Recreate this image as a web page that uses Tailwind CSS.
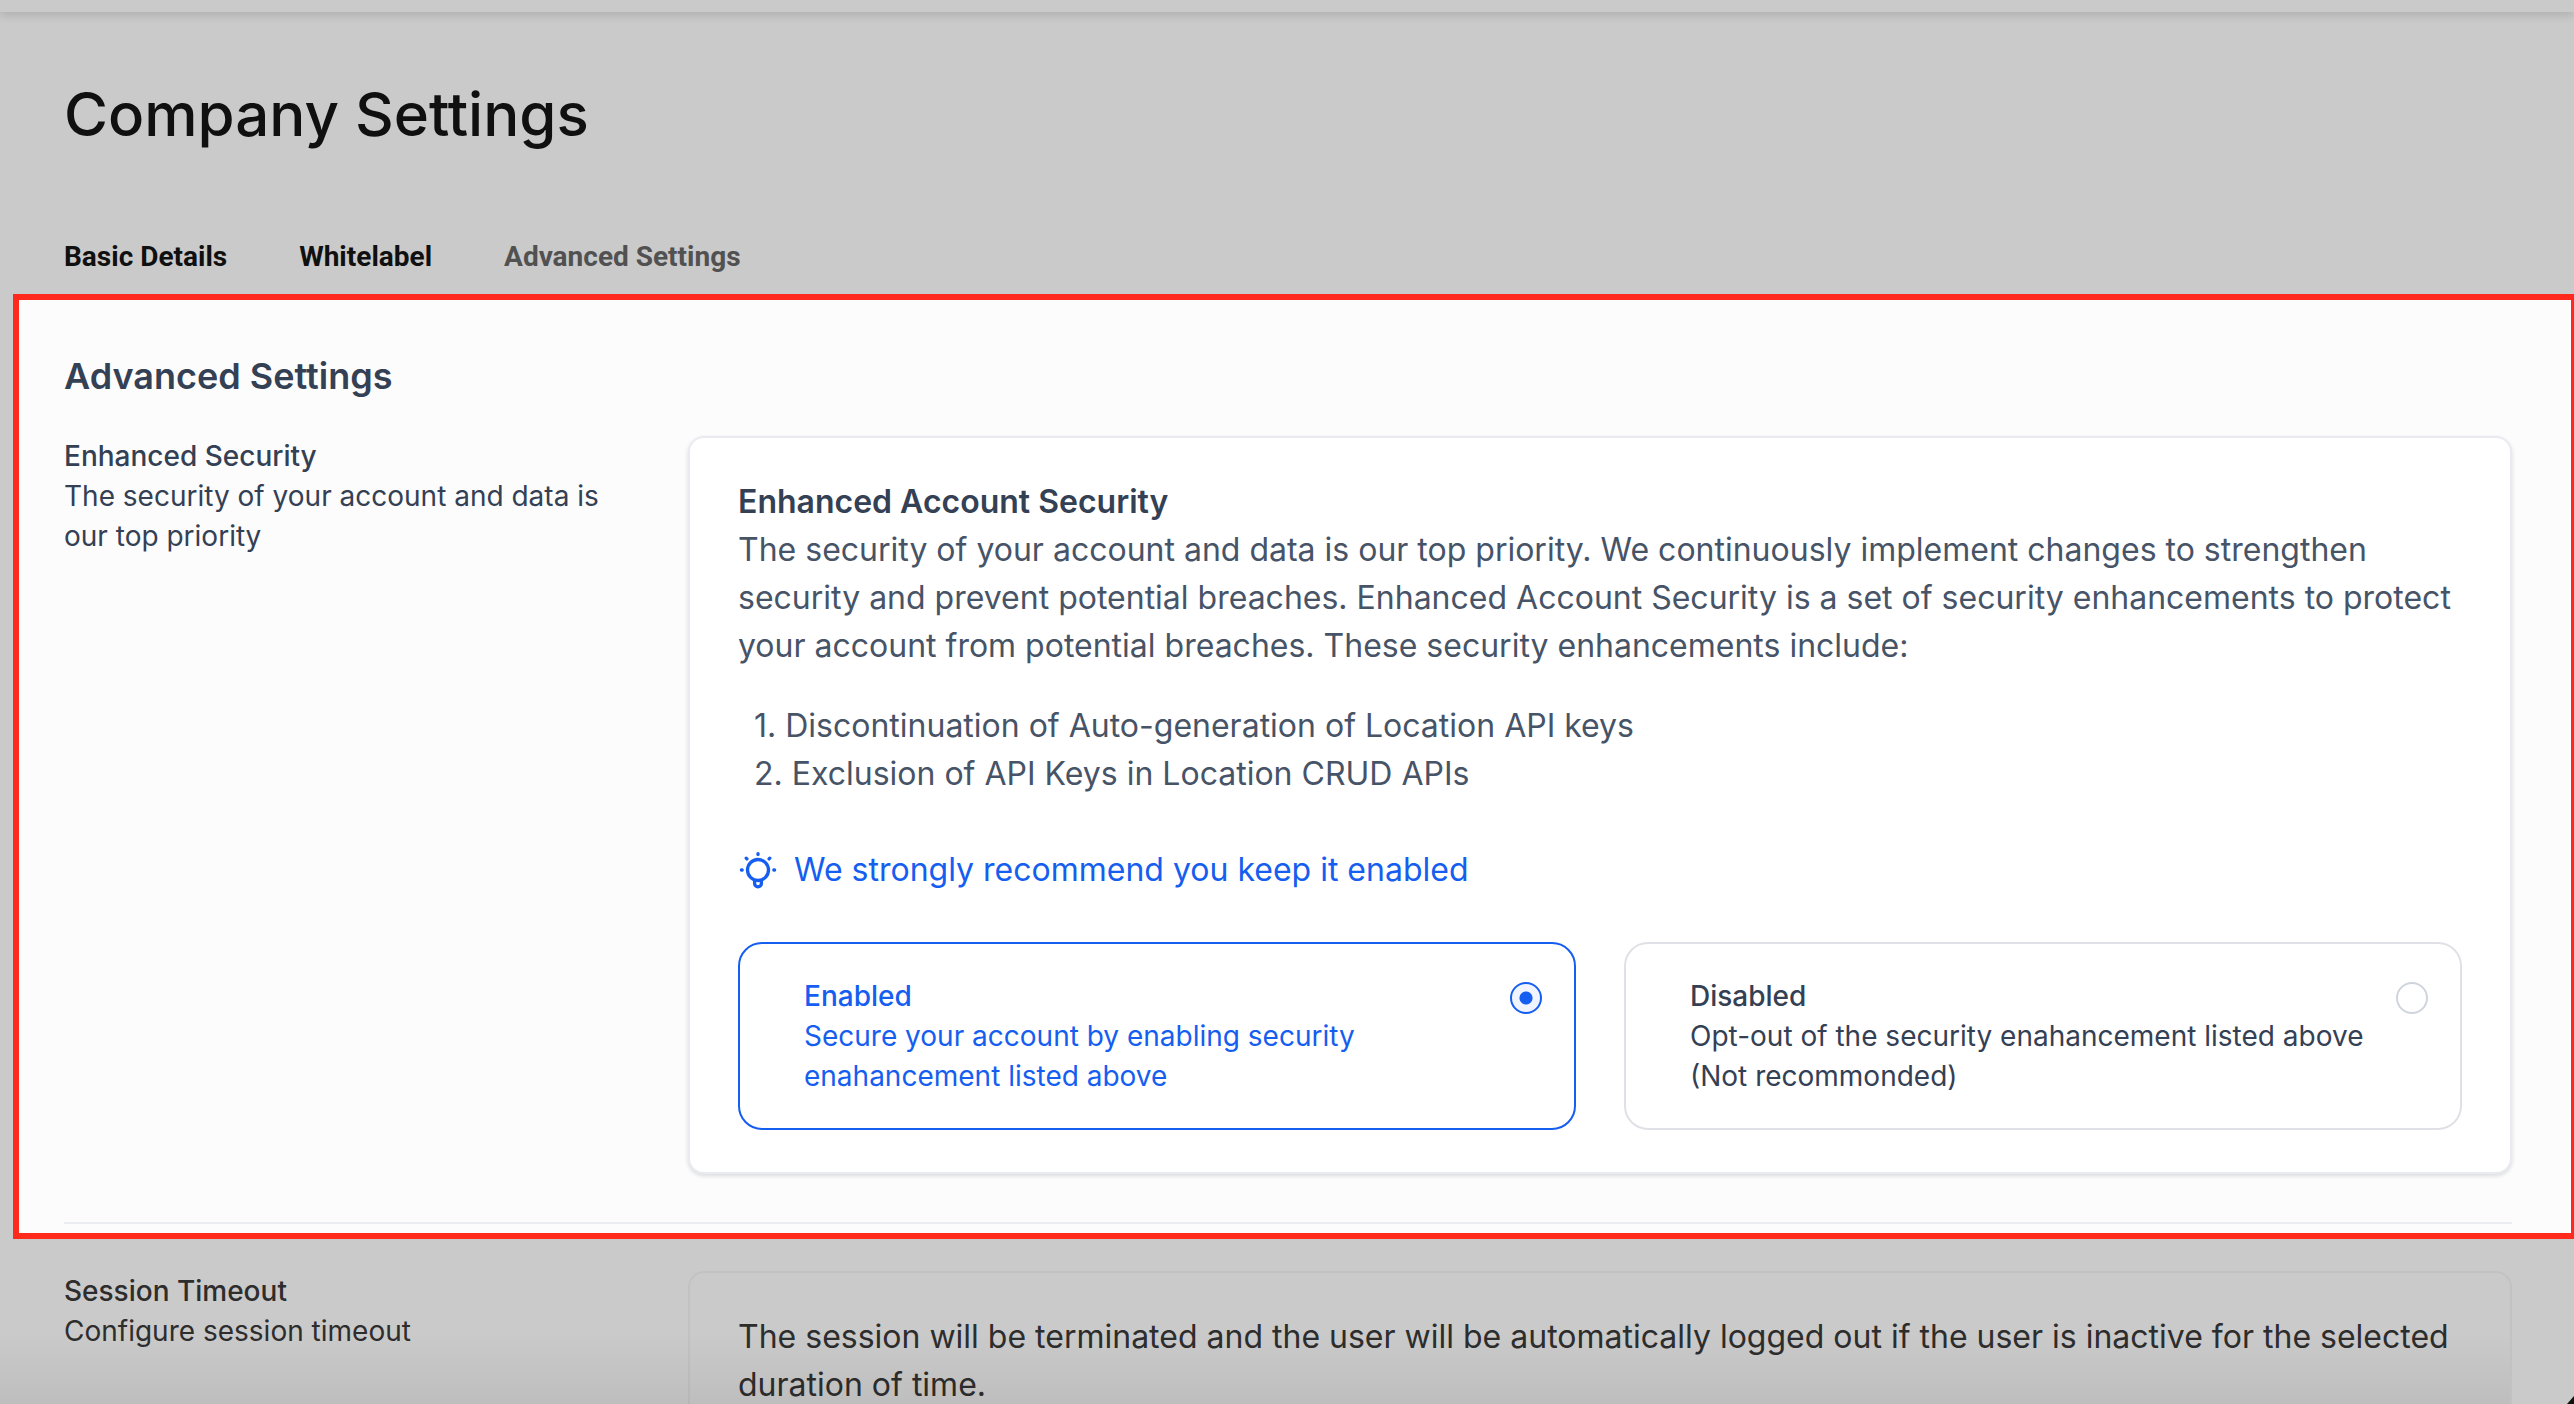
<!DOCTYPE html>
<html lang="en">

  <head>
    <meta charset="UTF-8">
    <meta name="viewport" content="width=device-width, initial-scale=1.0">
    <script src="https://cdn.jsdelivr.net/npm/@tailwindcss/browser@4"></script>
    <title>Company Settings</title>
  </head>

  <body class="bg-[#cacaca] font-['Inter',sans-serif] text-[28px] leading-10 text-[#344054]">
    <div class="relative h-screen overflow-hidden">
      <header class="h-3 bg-[#cacaca] shadow-[0_4px_8px_rgba(0,0,0,0.12)]"></header>

      <div class="px-16 pt-[62px] text-[#101010]">
        <h1 class="text-[60px] leading-[80px] font-medium">Company Settings</h1>
        <nav class="flex gap-18 pt-[83px] pb-[17px] font-['Roboto',sans-serif] font-bold">
          <a href="#">Basic Details</a>
          <a href="#">Whitelabel</a>
          <a href="#" class="text-[#515151]">Advanced Settings</a>
        </nav>
      </div>

      <main>
        <section class="ml-[13px] border-6 border-r-3 border-[#ff2a1c] bg-[#fcfcfc] pt-12 pb-[9px] pl-[45px] pr-[59px]">
          <h2 class="pb-8 text-[36px] leading-14 font-semibold">Advanced Settings</h2>
          <div class="grid grid-cols-4 gap-12 border-b-2 border-[#eaecf0] pb-12">
            <div class="pr-8">
              <h3 class="font-medium">Enhanced Security</h3>
              <p>The security of your account and data is our top priority</p>
            </div>
            <div class="col-span-3 rounded-2xl border-2 border-[#eaebf0] bg-white px-12 pt-10 pb-[42px] text-[32px] leading-12 text-[#475467] shadow-[0_2px_4px_rgba(16,24,40,0.14)]">
              <h3 class="font-semibold text-[#344054]">Enhanced Account Security</h3>
              <p>The security of your account and data is our top priority. We continuously implement changes to strengthen security and prevent potential breaches. Enhanced Account Security is a set of security enhancements to protect your account from potential breaches. These security enhancements include:</p>
              <ol class="mt-8 list-none px-4">
                <li>1. Discontinuation of Auto-generation of Location API keys</li>
                <li>2. Exclusion of API Keys in Location CRUD APIs</li>
              </ol>
              <p class="mt-12 flex items-center gap-4 text-[#155eef]">
                <svg class="size-10" viewBox="0 0 40 40" fill="none" stroke="currentColor" stroke-width="3.3" stroke-linecap="round">
                  <circle cx="20" cy="20" r="10.5" />
                  <path d="M20 3.6v.8M8.2 8.2l.7.7M31.8 8.2l-.7.7M3.4 20h.8M36.6 20h-.8" />
                  <path d="M16.6 30.5v3a3.4 3.4 0 0 0 6.8 0v-3" />
                </svg>
                We strongly recommend you keep it enabled
              </p>
              <div class="mt-12 grid grid-cols-2 gap-12 text-[28px] leading-10">
                <label class="flex items-start justify-between rounded-3xl border-2 border-[#155eef] py-8 pr-8 pl-16 text-[#155eef]">
                  <span>
                    <span class="block font-medium">Enabled</span>
                    <span class="block max-w-[620px]">Secure your account by enabling security enahancement listed above</span>
                  </span>
                  <input type="radio" name="security" checked class="mt-1.5 size-8 shrink-0 appearance-none rounded-full border-2 border-[#d0d5dd] checked:border-[#155eef] checked:bg-[radial-gradient(circle,#155eef_6px,#eff4ff_7px)]">
                </label>
                <label class="flex items-start justify-between rounded-3xl border-2 border-[#e0e1e6] py-8 pr-8 pl-16 text-[#344054]">
                  <span>
                    <span class="block font-medium">Disabled</span>
                    <span class="block">Opt-out of the security enahancement listed above (Not recommonded)</span>
                  </span>
                  <input type="radio" name="security" class="mt-1.5 size-8 shrink-0 appearance-none rounded-full border-2 border-[#d0d5dd] checked:border-[#155eef] checked:bg-[radial-gradient(circle,#155eef_6px,#eff4ff_7px)]">
                </label>
              </div>
            </div>
          </div>
        </section>

        <section class="grid grid-cols-4 gap-12 pt-8 pr-[62px] pl-16 text-[#2d2d2d]">
          <div>
            <h3 class="font-medium">Session Timeout</h3>
            <p>Configure session timeout</p>
          </div>
          <div class="col-span-3 rounded-2xl border-2 border-[#c2c2c2] px-12 py-10 text-[32px] leading-12">
            <p>The session will be terminated and the user will be automatically logged out if the user is inactive for the selected duration of time.</p>
          </div>
        </section>
      </main>

      <!-- shade over the bottom edge -->
      <div class="pointer-events-none absolute bottom-0 left-0 right-16 h-18 bg-linear-to-b from-black/0 to-black/6"></div>
      <svg class="absolute right-0 bottom-0 h-2 w-[7px]" viewBox="0 0 7 8"><path d="M0 8L7 0V8Z" fill="#111" /></svg>
    </div>
  </body>

</html>
